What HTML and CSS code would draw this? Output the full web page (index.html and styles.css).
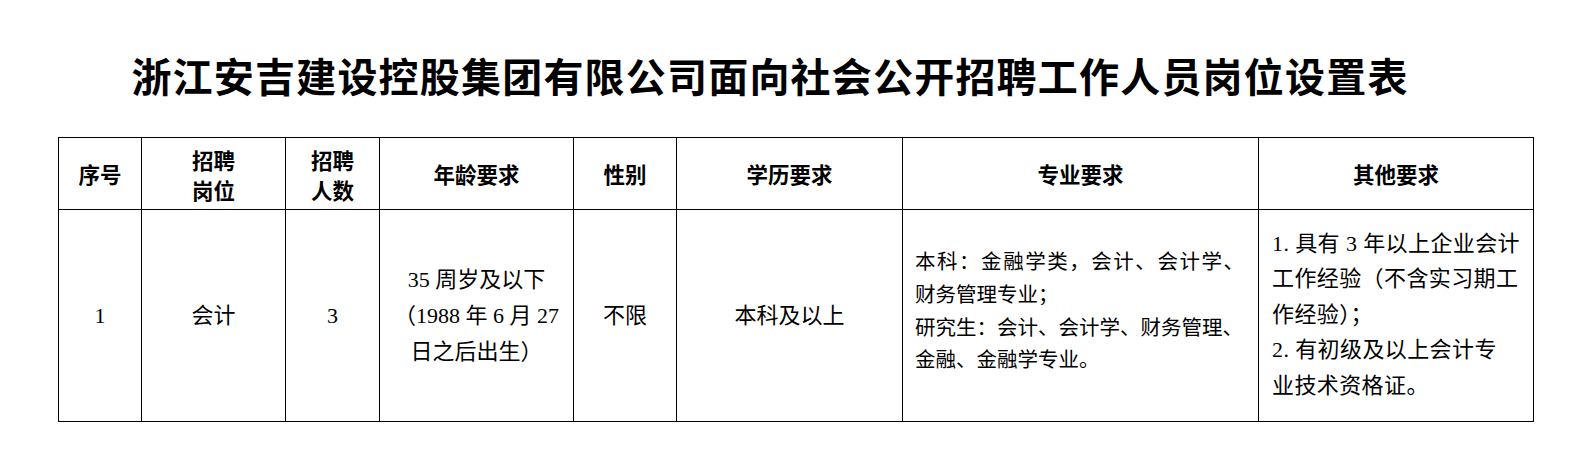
FILE: index.html
```html
<!DOCTYPE html>
<html lang="zh-CN">
<head>
<meta charset="utf-8">
<title>岗位设置表</title>
<link rel="stylesheet" href="styles.css">
</head>
<body>
<div class="page">
  <h1 class="title">浙江安吉建设控股集团有限公司面向社会公开招聘工作人员岗位设置表</h1>
  <table class="jobs">
    <colgroup>
      <col class="c1"><col class="c2"><col class="c3"><col class="c4">
      <col class="c5"><col class="c6"><col class="c7"><col class="c8">
    </colgroup>
    <thead>
      <tr class="head">
        <th>序号</th>
        <th><span class="two">招聘<br>岗位</span></th>
        <th><span class="two">招聘<br>人数</span></th>
        <th>年龄要求</th>
        <th>性别</th>
        <th>学历要求</th>
        <th>专业要求</th>
        <th>其他要求</th>
      </tr>
    </thead>
    <tbody>
      <tr class="row">
        <td>1</td>
        <td>会计</td>
        <td>3</td>
        <td class="age">35 周岁及以下<br>（1988 年 6 月 27<br>日之后出生）</td>
        <td>不限</td>
        <td>本科及以上</td>
        <td class="major">
          <span class="ln just">本科：金融学类，会计、会计学、</span>
          <span class="ln">财务管理专业；</span>
          <span class="ln">研究生：会计、会计学、财务管理、</span>
          <span class="ln">金融、金融学专业。</span>
        </td>
        <td class="other">1. 具有 3 年以上企业会计<br>工作经验（不含实习期工<br>作经验）；<br>2. 有初级及以上会计专<br>业技术资格证。</td>
      </tr>
    </tbody>
  </table>
</div>
</body>
</html>
```

FILE: styles.css
```css
html, body {
  margin: 0;
  padding: 0;
  background: #ffffff;
}

body {
  font-family: "Liberation Serif", "Noto Sans CJK SC", serif;
  color: #000000;
}

.page {
  width: 1576px;
  height: 461px;
  overflow: hidden;
}

.title {
  margin: 0 0 37px 0;
  padding: 50px 36px 0 0;
  font-family: "Noto Sans CJK SC", sans-serif;
  font-size: 40px;
  line-height: 50px;
  font-weight: 700;
  letter-spacing: 1.2px;
  text-align: center;
  white-space: nowrap;
}

.jobs {
  margin-left: 58px;
  border-collapse: collapse;
  table-layout: fixed;
  width: 1475px;
}

.c1 { width: 83px; }
.c2 { width: 144px; }
.c3 { width: 94px; }
.c4 { width: 194px; }
.c5 { width: 103px; }
.c6 { width: 226px; }
.c7 { width: 356px; }
.c8 { width: 275px; }

.jobs th,
.jobs td {
  border: 1.5px solid #000000;
  padding: 0;
  text-align: center;
  vertical-align: middle;
}

.jobs th {
  font-family: "Noto Sans CJK SC", sans-serif;
  font-size: 21.5px;
  font-weight: 700;
  line-height: 30px;
}

.head {
  height: 72px;
}

.two {
  display: inline-block;
  padding-top: 2px;
}

.row {
  height: 212px;
}

.jobs td {
  font-size: 22px;
  line-height: 36px;
  font-weight: 400;
}

.jobs td.age {
  line-height: 36px;
}

.jobs td.major {
  text-align: left;
  padding: 0 14px 8px 12px;
  font-size: 20.5px;
}

.major .ln {
  display: block;
  line-height: 32.7px;
  text-align: left;
}

.major .just {
  text-align: justify;
  text-align-last: justify;
}

.jobs td.other {
  text-align: left;
  padding: 0 8px 2px 13px;
  font-size: 22px;
  line-height: 35.5px;
  letter-spacing: 0.4px;
}
```
